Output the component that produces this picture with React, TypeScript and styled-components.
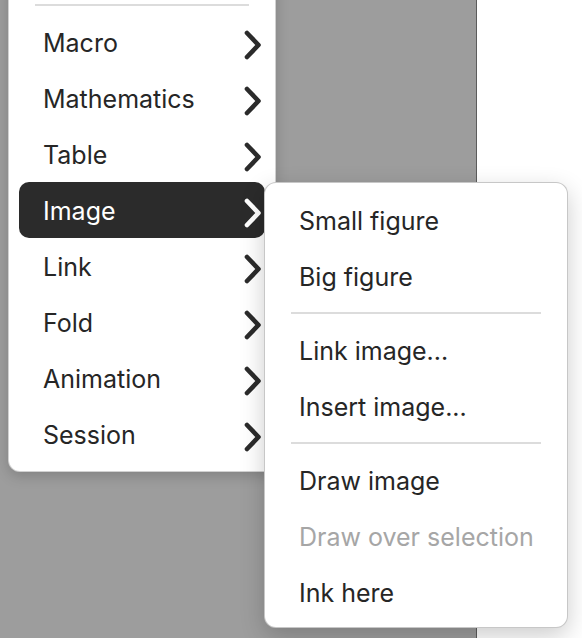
import React from 'react';
import styled, { createGlobalStyle } from 'styled-components';

const GlobalStyle = createGlobalStyle`
  html, body {
    margin: 0;
    padding: 0;
    height: 100%;
    overflow: hidden;
  }
  body {
    font-family: Inter, "Noto Sans", "Liberation Sans", sans-serif;
    -webkit-font-smoothing: antialiased;
  }
`;

const Screen = styled.div`
  display: flex;
  width: 582px;
  height: 638px;
  overflow: hidden;
`;

const Backdrop = styled.div`
  position: relative;
  width: 477px;
  background: #9d9d9d;
  border-right: 1px solid #5c5c5c;
  padding-left: 8px;
  box-sizing: border-box;
`;

const SidePanel = styled.div`
  flex: 1;
  background: #ffffff;
`;

const Menu = styled.div`
  width: 268px;
  box-sizing: border-box;
  margin-top: -16px;
  padding: 11px 0 9px;
  background: #ffffff;
  border: 1px solid rgba(0, 0, 0, 0.18);
  border-radius: 0 0 12px 12px;
  box-shadow: 0 4px 14px rgba(0, 0, 0, 0.18);
  display: flex;
  flex-direction: column;
`;

const SubMenu = styled(Menu)`
  position: absolute;
  left: 264px;
  top: 182px;
  width: 304px;
  margin: 0;
  padding: 9px 0 7px;
  border-radius: 12px;
  border-color: rgba(0, 0, 0, 0.22);
  box-shadow: 0 8px 24px rgba(0, 0, 0, 0.2);
  z-index: 2;
`;

const Separator = styled.div`
  height: 18px;
  display: flex;
  align-items: center;
  padding: 0 26px;

  &::after {
    content: '';
    flex: 1;
    height: 2px;
    background: #dcdcdc;
  }
`;

const Item = styled.div<{ $active?: boolean; $disabled?: boolean }>`
  height: 56px;
  margin: 0 10px;
  padding: 0 4px 0 24px;
  display: flex;
  align-items: center;
  justify-content: space-between;
  border-radius: 10px;
  font-size: 25px;
  background: ${({ $active }) => ($active ? '#2b2b2b' : 'transparent')};
  color: ${({ $active, $disabled }) =>
    $active ? '#ffffff' : $disabled ? '#a6a6a6' : '#262626'};
`;

const Label = styled.span`
  padding-top: 2px;
`;

const Chevron = styled.svg`
  width: 17px;
  height: 30px;
  flex: none;
  margin-top: 6px;
`;

function ChevronIcon({ color }: { color: string }) {
  return (
    <Chevron viewBox="0 0 17 30">
      <path
        d="M3 3 L14.5 15 L3 27"
        fill="none"
        stroke={color}
        strokeWidth="4.6"
        strokeLinecap="round"
        strokeLinejoin="round"
      />
    </Chevron>
  );
}

const mainItems = ['Macro', 'Mathematics', 'Table', 'Image', 'Link', 'Fold', 'Animation', 'Session'];

type SubEntry = { label?: string; disabled?: boolean; sep?: boolean };

const subItems: SubEntry[] = [
  { label: 'Small figure' },
  { label: 'Big figure' },
  { sep: true },
  { label: 'Link image...' },
  { label: 'Insert image...' },
  { sep: true },
  { label: 'Draw image' },
  { label: 'Draw over selection', disabled: true },
  { label: 'Ink here' },
];

export default function App() {
  return (
    <Screen>
      <GlobalStyle />
      <Backdrop>
        <Menu>
          <Separator />
          {mainItems.map((label) => {
            const active = label === 'Image';
            return (
              <Item key={label} $active={active}>
                <Label>{label}</Label>
                <ChevronIcon color={active ? '#ffffff' : '#2b2b2b'} />
              </Item>
            );
          })}
        </Menu>
        <SubMenu>
          {subItems.map((entry, i) =>
            entry.sep ? (
              <Separator key={i} />
            ) : (
              <Item key={i} $disabled={entry.disabled}>
                <Label>{entry.label}</Label>
              </Item>
            )
          )}
        </SubMenu>
      </Backdrop>
      <SidePanel />
    </Screen>
  );
}
